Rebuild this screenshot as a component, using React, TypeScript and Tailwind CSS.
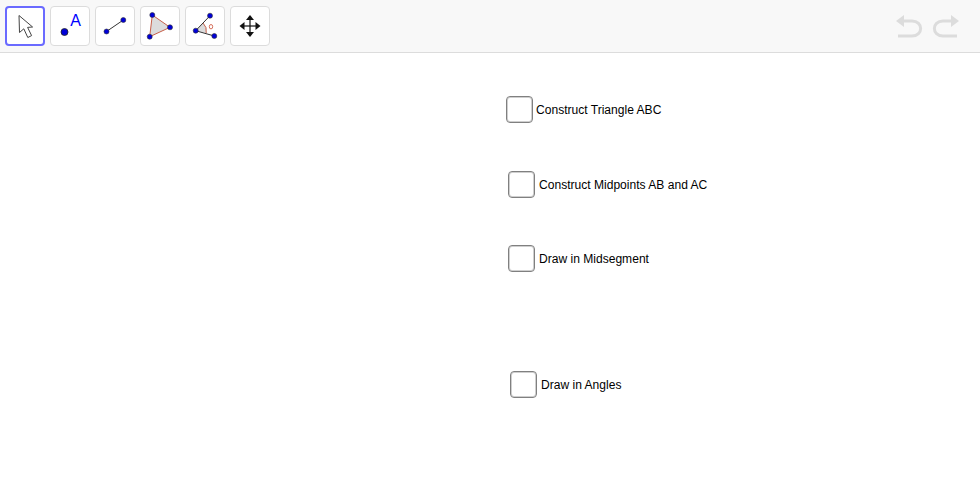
import React from "react";

const B = "#0000d8";
const S = "#333";

function ToolButton({ active, children }: { active?: boolean; children: React.ReactNode }) {
  return (
    <div
      className={
        active
          ? "w-10 h-10 rounded-[4px] border-2 border-[#6a6aff] bg-white flex items-center justify-center"
          : "w-10 h-10 rounded-[4px] border border-[#dcdcdc] bg-white flex items-center justify-center"
      }
    >
      {children}
    </div>
  );
}

function Icon({ children }: { children: React.ReactNode }) {
  return (
    <svg width="32" height="32" viewBox="0 0 32 32" className="block shrink-0">
      {children}
    </svg>
  );
}

function Dot({ cx, cy }: { cx: number; cy: number }) {
  return <circle cx={cx} cy={cy} r="2.5" fill={B} stroke={S} strokeWidth="0.6" />;
}

function CanvasCheck({ x, y, gap, label }: { x: number; y: number; gap: number; label: string }) {
  return (
    <div className="absolute flex items-center" style={{ left: x, top: y }}>
      <div className="w-[27px] h-[27px] rounded-[4px] border border-[#808080] shadow-[inset_0_0_0_1px_#cfcfcf] bg-white" />
      <span
        className="text-[12.07px] leading-none pt-[1px] text-black whitespace-nowrap font-['Liberation_Sans',Arial,sans-serif]"
        style={{ marginLeft: gap }}
      >
        {label}
      </span>
    </div>
  );
}

export default function App() {
  return (
    <div className="relative w-[980px] h-[500px] bg-white overflow-hidden font-['Liberation_Sans',Arial,sans-serif]">
      <div className="h-[53px] bg-[#f8f8f8] border-b border-[#dcdcdc] flex items-start justify-between pt-[6px] pl-[5px] pr-[20px]">
        <div className="flex gap-[5px]">
          <ToolButton active>
            <Icon>
              <path d="M10 5.5 L10.5 22.5 L14.8 18.8 L18.8 27.5 L22.6 25.6 L18.6 17.4 L23.6 17 Z" fill="#fff" stroke="#444" strokeWidth="1" strokeLinejoin="round" />
            </Icon>
          </ToolButton>
          <ToolButton>
            <Icon>
              <circle cx="10.5" cy="22" r="3.5" fill={B} stroke="#222" strokeWidth="0.8" />
              <text x="16.3" y="15.5" fontSize="16" fill="#0000ff" fontFamily="'Liberation Sans', Arial, sans-serif">A</text>
            </Icon>
          </ToolButton>
          <ToolButton>
            <Icon>
              <line x1="7.5" y1="21.5" x2="24.3" y2="10" stroke={S} strokeWidth="1" />
              <Dot cx={7.5} cy={21.5} />
              <Dot cx={24.3} cy={10} />
            </Icon>
          </ToolButton>
          <ToolButton>
            <Icon>
              <polygon points="8.3,5 26,17.3 5.7,26.7" fill="#dcdcdc" stroke="#c8604a" strokeWidth="1" />
              <Dot cx={8.3} cy={5} />
              <Dot cx={26} cy={17.3} />
              <Dot cx={5.7} cy={26.7} />
            </Icon>
          </ToolButton>
          <ToolButton>
            <Icon>
              <path d="M6.7 20.7 L14 13 A11 11 0 0 1 17.2 23 Z" fill="#dcdcdc" />
              <path d="M14 13 A11 11 0 0 1 17.2 23" fill="none" stroke="#c8604a" strokeWidth="1" />
              <line x1="6.7" y1="20.7" x2="21" y2="5.7" stroke={S} strokeWidth="1" />
              <line x1="6.7" y1="20.7" x2="25.3" y2="26" stroke={S} strokeWidth="1" />
              <Dot cx={6.7} cy={20.7} />
              <Dot cx={21} cy={5.7} />
              <Dot cx={25.3} cy={26} />
              <ellipse cx="22" cy="16.7" rx="1.7" ry="2.2" fill="none" stroke="#d0604a" strokeWidth="0.9" />
            </Icon>
          </ToolButton>
          <ToolButton>
            <Icon>
              <line x1="16" y1="8" x2="16" y2="24" stroke="#111" strokeWidth="1.2" />
              <line x1="8" y1="16" x2="24" y2="16" stroke="#111" strokeWidth="1.2" />
              <polygon points="16,5 12,10 20,10" fill="#111" />
              <polygon points="16,27 12,22 20,22" fill="#111" />
              <polygon points="5.5,16 10.5,12 10.5,20" fill="#111" />
              <polygon points="26.5,16 21.5,12 21.5,20" fill="#111" />
            </Icon>
          </ToolButton>
        </div>
        <div className="flex gap-[9px] mt-[8px]">
          <svg width="28" height="25" viewBox="0 0 28 25" className="block">
            <path d="M7 7 H17 C28.5 7 28.5 22 17 22 H3" fill="none" stroke="#dcdcdc" strokeWidth="3" />
            <polygon points="1,7 9,1 9,13" fill="#dcdcdc" />
          </svg>
          <svg width="28" height="25" viewBox="0 0 28 25" className="block">
            <path d="M21 7 H11 C-0.5 7 -0.5 22 11 22 H25" fill="none" stroke="#dcdcdc" strokeWidth="3" />
            <polygon points="27,7 19,1 19,13" fill="#dcdcdc" />
          </svg>
        </div>
      </div>
      <CanvasCheck x={506} y={96} gap={3} label="Construct Triangle ABC" />
      <CanvasCheck x={508} y={171} gap={4} label="Construct Midpoints AB and AC" />
      <CanvasCheck x={508} y={245} gap={4} label="Draw in Midsegment" />
      <CanvasCheck x={510} y={371} gap={4} label="Draw in Angles" />
    </div>
  );
}
